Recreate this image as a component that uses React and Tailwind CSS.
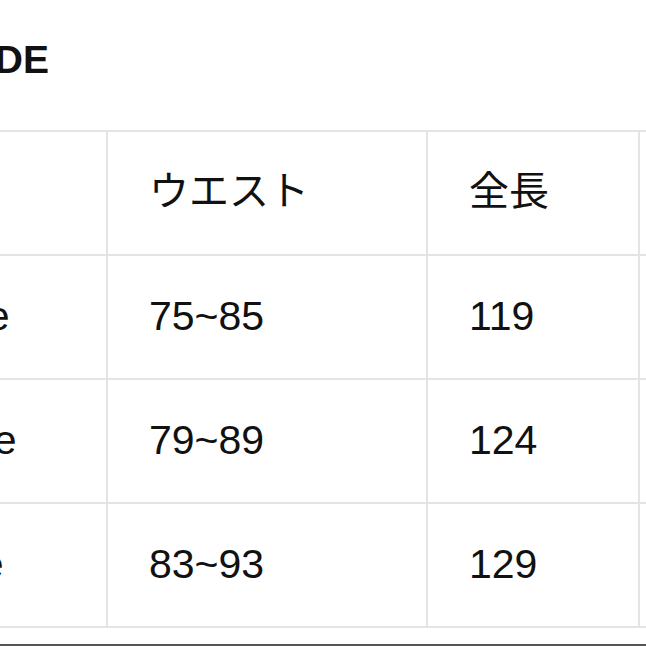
export default function App() {
  const cell = "shrink-0 flex items-center border-r-2 border-[#e4e4e4]";
  const rows = [
    ["S size", "75~85", "119"],
    ["M size", "79~89", "124"],
    ["L size", "83~93", "129"],
  ];
  const font = { fontFamily: '"Liberation Sans", Arial, "Noto Sans CJK JP", sans-serif' };
  return (
    <div className="w-[646px] h-[646px] overflow-hidden bg-white flex flex-col text-[#111]" style={font}>
      <div className="mt-[41px] ml-[-172px] text-[39px] leading-[38px] font-bold whitespace-nowrap">SIZE GUIDE</div>
      <div className="mt-[51px] ml-[-136px] w-[1100px] border-t-2 border-[#e4e4e4]">
        <div className="flex h-[124px] border-b-2 border-[#e4e4e4] text-[40px]" style={{ fontFamily: '"Noto Sans CJK JP", sans-serif' }}>
          <div className={`${cell} w-[244px] pl-[34px] pb-[10px]`}></div>
          <div className={`${cell} w-[320px] pl-[41px] pb-[10px]`}>ウエスト</div>
          <div className={`${cell} w-[212px] pl-[41px] pb-[10px]`}>全長</div>
          <div className={`${cell} w-[200px] pl-[41px] pb-[10px]`}></div>
        </div>
        {rows.map((r) => (
          <div key={r[0]} className="flex h-[124px] border-b-2 border-[#e4e4e4] text-[41px]">
            <div className={`${cell} w-[244px] pl-[34px] whitespace-nowrap`}>{r[0]}</div>
            <div className={`${cell} w-[320px] pl-[41px]`}>{r[1]}</div>
            <div className={`${cell} w-[212px] pl-[41px]`}>{r[2]}</div>
            <div className={`${cell} w-[200px] pl-[41px]`}></div>
          </div>
        ))}
      </div>
      <div className="mt-auto h-[2px] bg-[#555] shrink-0"></div>
    </div>
  );
}
